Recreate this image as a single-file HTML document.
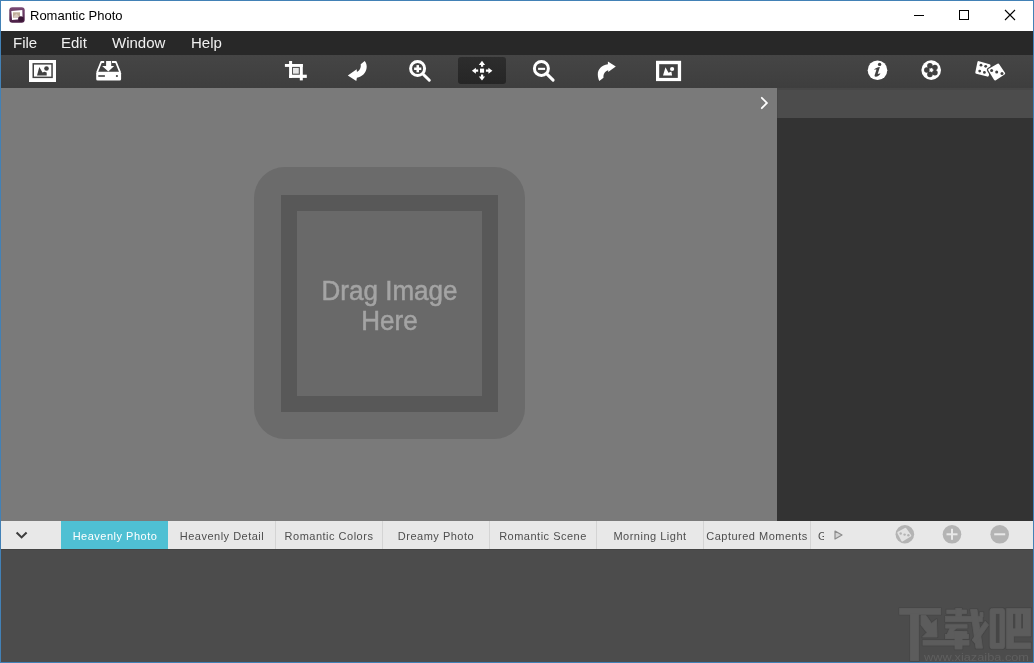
<!DOCTYPE html>
<html><head><meta charset="utf-8">
<style>
*{margin:0;padding:0;box-sizing:border-box}
html,body{width:1034px;height:663px;overflow:hidden;background:#4281b6;font-family:"Liberation Sans",sans-serif}
.abs,.tab{will-change:transform}
.abs{position:absolute}
#title{left:1px;top:1px;width:1032px;height:30px;background:#fff}
#title .t{left:29px;top:7px;font-size:13px;color:#000;white-space:nowrap}
#menu{left:1px;top:31px;width:1032px;height:24px;background:#282828}
#menu span{position:absolute;top:3px;font-size:15px;color:#f0f0f0}
#tool{left:1px;top:55px;width:1032px;height:33px;background:linear-gradient(#454545,#3e3e3e)}
#movebtn{left:458px;top:57px;width:48px;height:27px;border-radius:3px;background:linear-gradient(#2d2d2d,#262626)}
#canvas{left:1px;top:88px;width:776px;height:433px;background:#7a7a7a}
#rhead{left:777px;top:88px;width:256px;height:30px;background:#4c4c4c;border-top:2px solid #474747;border-left:1px solid #484848}
#rpanel{left:777px;top:118px;width:256px;height:403px;background:#333}
#tabs{left:1px;top:521px;width:1032px;height:28px;background:#e8e8e8}
#bottom{left:1px;top:549px;width:1032px;height:113px;background:#4c4c4c;border-top:1px solid #444}
.tab{position:absolute;top:521px;height:28px;width:107px;font-size:11px;letter-spacing:0.5px;color:#4e4e4e;text-align:center;line-height:31px;white-space:nowrap;overflow:hidden;padding-left:1px}
.sep{position:absolute;top:521px;width:1px;height:28px;background:#d4d4d4}
#drop{left:254px;top:167px;width:271px;height:272px;border-radius:31px;background:#6b6b6b}
#frame{left:281px;top:195px;width:217px;height:217px;border:16px solid #585858;background:#696969}
#dtext{left:281px;top:276.5px;width:217px;text-align:center;font-size:26px;line-height:27.6px;color:#a4a4a4;-webkit-text-stroke:0.5px #a4a4a4;transform:scaleY(1.06);transform-origin:0 0}
</style></head><body>
<div id="title" class="abs">
  <div class="t abs">Romantic Photo</div>
</div>
<div id="menu" class="abs">
  <span style="left:12px">File</span>
  <span style="left:60px">Edit</span>
  <span style="left:111px">Window</span>
  <span style="left:190px">Help</span>
</div>
<div id="tool" class="abs"></div>
<div id="movebtn" class="abs"></div>
<div id="canvas" class="abs"></div>
<div id="rhead" class="abs"></div>
<div id="rpanel" class="abs"></div>
<div id="drop" class="abs"></div>
<div id="frame" class="abs"></div>
<div id="dtext" class="abs">Drag Image<br>Here</div>
<div id="tabs" class="abs"></div>
<div style="position:absolute;left:61px;top:521px;width:107px;height:28px;background:#4fc0d3"></div>
<div class="tab" style="left:61px;color:#fff">Heavenly Photo</div>
<div class="tab" style="left:168px">Heavenly Detail</div>
<div class="sep" style="left:275px"></div>
<div class="tab" style="left:275px">Romantic Colors</div>
<div class="sep" style="left:382px"></div>
<div class="tab" style="left:382px">Dreamy Photo</div>
<div class="sep" style="left:489px"></div>
<div class="tab" style="left:489px">Romantic Scene</div>
<div class="sep" style="left:596px"></div>
<div class="tab" style="left:596px">Morning Light</div>
<div class="sep" style="left:703px"></div>
<div class="tab" style="left:703px">Captured Moments</div>
<div class="sep" style="left:810px"></div>
<div class="tab" style="left:810px;width:14px;text-align:left;padding-left:8px">G</div>
<div id="bottom" class="abs"></div>

<svg class="abs" style="left:0;top:0" width="1034" height="663" viewBox="0 0 1034 663">
  <!-- window controls -->
  <rect x="914" y="15" width="10" height="1" fill="#000"/>
  <rect x="959.5" y="10.5" width="9" height="9" fill="none" stroke="#000" stroke-width="1"/>
  <path d="M1005,10 L1015,20 M1015,10 L1005,20" stroke="#000" stroke-width="1.1"/>
  <!-- title icon -->
  <defs><linearGradient id="tig" x1="0" y1="0" x2="0" y2="1"><stop offset="0" stop-color="#7a4a74"/><stop offset="1" stop-color="#4a1e45"/></linearGradient></defs>
  <g transform="translate(9,7)">
    <rect x="0.3" y="0.3" width="15.4" height="15.4" rx="3" fill="url(#tig)"/>
    <path d="M2.4,4.1 L13.3,3 L13.6,12 L3,12.9 Z" fill="#fff"/>
    <rect x="4" y="5.3" width="7" height="5.6" fill="#bfae98"/>
    <path d="M5,9 L7.5,6.5 L10,9.5 L10,10.9 L4,10.9 Z" fill="#d8c8c0"/>
    <circle cx="11.9" cy="12" r="2.8" fill="#3a1636"/>
  </g>
  <!-- image icon 1 -->
  <g transform="translate(29,60)">
    <rect x="0" y="0" width="27" height="22" fill="#fff"/>
    <rect x="4.25" y="3.85" width="18.8" height="13.5" fill="#fff" stroke="#414141" stroke-width="1.5"/>
    <path d="M8,15.4 L10.3,7.1 L13.5,12.5 L15.5,11.8 L17.7,12.5 L17.7,15.4 Z" fill="#414141"/>
    <circle cx="17.5" cy="8.5" r="2.3" fill="#414141"/>
  </g>
  <!-- drive icon -->
  <g transform="translate(92,57)">
    <rect x="4.2" y="14.8" width="24.9" height="8.6" rx="1.5" fill="#fff"/>
    <rect x="6.3" y="18.2" width="6.6" height="1.6" fill="#414141"/>
    <circle cx="24.9" cy="19" r="1.1" fill="#414141"/>
    <path d="M12.2,5 L9.2,5 L5,15.5 M20,5 L23.9,5 L28.2,15.5" fill="none" stroke="#fff" stroke-width="1.8" stroke-linejoin="round"/>
    <path d="M14.1,4 L19.2,4 L19.2,9.1 L22.2,9.1 L16.3,14.4 L10.1,9.1 L14.1,9.1 Z" fill="#fff"/>
  </g>
  <!-- crop -->
  <g transform="translate(280,57)" fill="#fff">
    <rect x="9.1" y="4" width="3" height="17"/>
    <rect x="4.9" y="7" width="17.9" height="2.9"/>
    <rect x="19.8" y="7" width="3" height="16.4"/>
    <rect x="9.1" y="17.7" width="17.7" height="3.2"/>
    <rect x="13" y="10.9" width="5.8" height="5.8" fill="#e6e6e6"/>
  </g>
  <!-- undo -->
  <g transform="translate(340,57)">
    <path d="M7.8,18.6 L16.7,12.2 L16.9,14.8 C19.5,13.8 21.2,11 20.7,7.2 L24.7,4 C26.3,6 27,8.5 26.6,11 C26,16 22,19.8 16.9,20.7 L16.3,24.1 Z" fill="#fff"/>
  </g>
  <!-- zoom in -->
  <g transform="translate(404,57)">
    <circle cx="13.6" cy="11.5" r="7" fill="none" stroke="#fff" stroke-width="3"/>
    <line x1="19.2" y1="17.2" x2="25.3" y2="23.2" stroke="#fff" stroke-width="3" stroke-linecap="round"/>
    <rect x="10.1" y="10.5" width="7.2" height="2.5" fill="#fff"/>
    <rect x="12.5" y="8.1" width="2.5" height="7.2" fill="#fff"/>
  </g>
  <!-- move -->
  <g transform="translate(468,57)" fill="#fff">
    <rect x="12" y="11.6" width="4.1" height="4.1"/>
    <path d="M14,3.7 L17.1,7.9 L15.2,7.9 L15.2,9.8 L13,9.8 L13,7.9 L10.8,7.9 Z"/>
    <path d="M14,23.6 L17.1,19.5 L15.2,19.5 L15.2,17.5 L13,17.5 L13,19.5 L10.8,19.5 Z"/>
    <path d="M3.9,13.7 L7.9,10.7 L7.9,12.6 L10.2,12.6 L10.2,14.8 L7.9,14.8 L7.9,16.7 Z"/>
    <path d="M24.4,13.7 L20.4,10.7 L20.4,12.6 L17.9,12.6 L17.9,14.8 L20.4,14.8 L20.4,16.7 Z"/>
  </g>
  <!-- zoom out -->
  <g transform="translate(528,57)">
    <circle cx="13.4" cy="11.4" r="7" fill="none" stroke="#fff" stroke-width="3"/>
    <line x1="19" y1="17.1" x2="25.1" y2="23.1" stroke="#fff" stroke-width="3" stroke-linecap="round"/>
    <rect x="10.1" y="10.8" width="7" height="2.1" fill="#fff"/>
  </g>
  <!-- redo -->
  <g transform="translate(590,57)">
    <path d="M25.8,9.5 L17.9,4.4 L17.9,7.3 C11.5,8 7.8,12.5 7.8,17.5 C7.8,19.8 8.4,22 9.3,23.9 L13.5,20.7 C13.2,17.5 14.5,14.2 18.2,13.2 L18.2,15 Z" fill="#fff"/>
  </g>
  <!-- image icon 2 -->
  <g transform="translate(652,57)">
    <rect x="4" y="3.8" width="25.1" height="20.3" fill="#fff"/>
    <rect x="7.2" y="7.2" width="18.6" height="13.7" fill="#414141"/>
    <path d="M11,18.6 L13.5,10.3 L16.5,15.8 L19.4,14.6 L20.1,18.6 Z" fill="#fff"/>
    <circle cx="20.1" cy="12" r="2.1" fill="#fff"/>
  </g>
  <!-- info -->
  <g transform="translate(862,57)">
    <circle cx="15.5" cy="13.3" r="9.8" fill="#fff"/>
    <circle cx="17.6" cy="7.4" r="1.7" fill="#414141"/>
    <path d="M12,12.9 C13,11.6 15.5,10.2 17.9,10.1 L15.7,17 C16.5,16.8 17.4,16.3 18.5,16.5 C17.5,18.4 15.5,19.9 13.7,19.8 C12.7,19.7 12.4,18.9 12.7,18 L14.5,12.6 C13.7,12.6 12.8,12.8 12,12.9 Z" fill="#414141"/>
  </g>
  <!-- flower -->
  <g transform="translate(915,57)">
    <circle cx="16.2" cy="13.1" r="9.8" fill="#fff"/>
    <g fill="#414141"><circle cx="14.91" cy="8.82" r="2.75"/><circle cx="19.94" cy="10.45" r="2.75"/><circle cx="19.94" cy="15.75" r="2.75"/><circle cx="14.91" cy="17.38" r="2.75"/><circle cx="11.80" cy="13.10" r="2.75"/><circle cx="16.3" cy="13.1" r="4.3"/></g>
    <polygon points="18.90,13.10 17.59,14.04 17.10,15.57 15.81,14.62 14.20,14.63 14.70,13.10 14.20,11.57 15.81,11.58 17.10,10.63 17.59,12.16" fill="#fff"/>
  </g>
  <!-- dice -->
  <g transform="translate(970,55)">
    <path d="M8.65,7.41 L19.22,10.43 L17.61,20.32 L6.59,17.47 Z" fill="#fff" stroke="#fff" stroke-width="2.6" stroke-linejoin="round"/>
    <g fill="#414141">
      <circle cx="11" cy="10.2" r="1.4"/><circle cx="15.7" cy="11.3" r="1.4"/>
      <circle cx="9.7" cy="16.1" r="1.4"/><circle cx="14.4" cy="17.4" r="1.4"/>
    </g>
    <path d="M28.14,9.86 L33.84,18.43 L25.14,24.14 L19.44,14.93 Z" fill="#414141" stroke="#414141" stroke-width="5" stroke-linejoin="round"/>
    <path d="M28.14,9.86 L33.84,18.43 L25.14,24.14 L19.44,14.93 Z" fill="#fff" stroke="#fff" stroke-width="2.6" stroke-linejoin="round"/>
    <g fill="#414141">
      <circle cx="21.6" cy="15.5" r="1.5"/><circle cx="26.7" cy="17" r="1.5"/><circle cx="32" cy="18.4" r="1.5"/>
    </g>
  </g>
  <!-- canvas chevron -->
  <path d="M761.8,97.8 L766.9,102.9 L761.8,108.2" fill="none" stroke="#fff" stroke-width="1.8" stroke-linecap="round"/>
  <!-- tabs chevron -->
  <path d="M16.6,532.6 L21.6,537.4 L26.6,532.6" fill="none" stroke="#3c3c3c" stroke-width="2.1"/>
  <!-- play triangle -->
  <path d="M835,531 L842,535 L835,539 Z" fill="#d4d4d4" stroke="#8c8c8c" stroke-width="1.2" stroke-linejoin="round"/>
  <!-- bottom icons -->
  <g transform="translate(892,522)">
    <circle cx="12.85" cy="12.25" r="9.3" fill="#b4b4b4"/>
    <path d="M13.4,7 L18.2,13.6 L10.4,18.4 L6.4,10.8 Z" fill="#e2e2e2" stroke="#e2e2e2" stroke-width="2.2" stroke-linejoin="round"/>
    <g fill="#b4b4b4"><circle cx="8.7" cy="11.5" r="1.2"/><circle cx="12.6" cy="12.6" r="1.2"/><circle cx="16.4" cy="13.3" r="1.2"/></g>
  </g>
  <circle cx="952" cy="534.3" r="9.3" fill="#b4b4b4"/>
  <rect x="946.5" y="533.3" width="11" height="2" fill="#e8e8e8"/>
  <rect x="951" y="528.8" width="2" height="11" fill="#e8e8e8"/>
  <circle cx="999.7" cy="534.3" r="9.3" fill="#b4b4b4"/>
  <rect x="994.2" y="533.3" width="11" height="2" fill="#e8e8e8"/>
  <!-- watermark -->
  <defs>
    <g id="wm">
    <rect x="899.7" y="608.5" width="41" height="5.8"/>
    <rect x="910.5" y="614" width="8.2" height="46.5"/>
    <path d="M921,615.5 L926,615.5 L931.5,623.5 L936.5,619.5 L937,637 L922.5,637 L927,632.5 L921,625 Z"/>
    <rect x="923" y="640.5" width="46" height="4.6"/>
    <rect x="946.8" y="610" width="19.6" height="3.6"/>
    <rect x="955.8" y="608.5" width="5.6" height="9"/>
    <rect x="945.3" y="616.6" width="37" height="5"/>
    <rect x="945.7" y="624.7" width="21.4" height="3.4"/>
    <path d="M950,628 L956.5,628 L953,631.5 L967,631.5 L967,635 L946.8,635 Z"/>
    <rect x="945.3" y="634.5" width="23.3" height="4"/>
    <rect x="955" y="631.6" width="7" height="17.4"/>
    <path d="M970.5,609.5 L977,609.5 L982.5,648.2 L976,648.2 Z"/>
    <path d="M980,612.5 L983,612.5 L983,617 L980,617 Z"/>
    <path d="M985.2,621.3 L988.5,625 L975.5,643.5 L972.2,640 Z"/>
    <rect x="990" y="608.4" width="14.5" height="40.3" rx="2.5"/>
    <path d="M1006.7,608.4 L1030.7,608.4 L1030.7,636 L1013.5,636 L1013.5,642.9 L1030.7,642.9 L1030.7,648.7 L1006.7,648.7 Z"/>
    </g>
  </defs>
  <use href="#wm" fill="#464646" stroke="#464646" stroke-width="2.6" stroke-linejoin="round"/>
  <use href="#wm" fill="#5c5c5c" stroke="#5c5c5c" stroke-width="0.8"/>
  <g fill="#464646">
    <rect x="995.9" y="613.9" width="3.6" height="29"/>
    <rect x="1013" y="613.9" width="2.3" height="14.5"/>
    <rect x="1021.2" y="613.9" width="1.8" height="14.5"/>
  </g>
  <text x="924" y="661" font-family="Liberation Sans" font-size="11.5" fill="#5f5f5f" textLength="105" lengthAdjust="spacingAndGlyphs">www.xiazaiba.com</text>
</svg>
</body></html>
